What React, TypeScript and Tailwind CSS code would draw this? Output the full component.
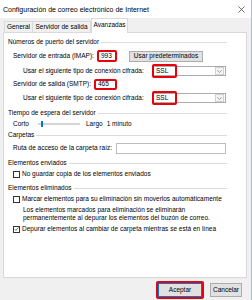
import type { ReactNode } from "react";

function RedMark({ className }: { className: string }) {
  return <div className={`pointer-events-none absolute rounded-[2px] border-2 border-[#e8000b] ${className}`} />;
}

function GroupHeader({ title, className = "" }: { title: string; className?: string }) {
  return (
    <div className={`flex h-[10px] items-center gap-[2px] pr-[19px] ${className}`}>
      <span className="whitespace-nowrap">{title}</span>
      <div className="h-px flex-1 bg-[#dcdcdc]" />
    </div>
  );
}

function Checkbox({ checked = false }: { checked?: boolean }) {
  return (
    <div className="mr-[2px] flex h-[7px] w-[7px] shrink-0 items-center justify-center border border-[#333] bg-white">
      {checked && (
        <svg width="6" height="6" viewBox="0 0 6 6">
          <path d="M0.8 3.1 L2.3 4.6 L5.2 1.2" fill="none" stroke="#222" strokeWidth="0.8" />
        </svg>
      )}
    </div>
  );
}

function CheckRow({ label, checked, className = "" }: { label: string; checked?: boolean; className?: string }) {
  return (
    <div className={`flex h-[10px] items-center pl-[5px] ${className}`}>
      <Checkbox checked={checked} />
      <span className="whitespace-nowrap">{label}</span>
    </div>
  );
}

function Select({ value }: { value: string }) {
  return (
    <div className="relative flex h-[10px] w-[74px] items-center border border-[#acacac] bg-white">
      <span className="flex-1 pl-[3px]">{value}</span>
      <div className="mr-[1px] flex h-[8px] w-[9px] items-center justify-center border border-[#d0d0d0] bg-[#f4f4f4]">
        <svg width="5" height="3" viewBox="0 0 5 3">
          <path d="M0.3 0.3 L2.5 2.5 L4.7 0.3" fill="none" stroke="#777" strokeWidth="0.7" />
        </svg>
      </div>
      <RedMark className="-left-[1px] -top-[3px] h-[14px] w-[25px]" />
    </div>
  );
}

function Row({ children, className = "" }: { children: ReactNode; className?: string }) {
  return <div className={`flex items-center ${className}`}>{children}</div>;
}

export default function App() {
  return (
    <div className="relative h-[300px] w-[252px] overflow-hidden border-r border-[#a9bccf] bg-[#f0f0f0] font-['Liberation_Sans',Arial,sans-serif] text-[6.5px] leading-none text-black">
      {/* Title bar */}
      <div className="flex h-[18px] items-center bg-white pl-[3px] pr-[6px]">
        <span className="flex-1 whitespace-nowrap text-[7px]">Configuración de correo electrónico de Internet</span>
        <svg width="7" height="7" viewBox="0 0 7 7">
          <path d="M0.5 0.5 L6.5 6.5 M6.5 0.5 L0.5 6.5" stroke="#333" strokeWidth="0.7" />
        </svg>
      </div>

      {/* Tabs */}
      <div className="flex h-[14px] items-end pl-[4px]">
        <div className="flex h-[11px] w-[29px] items-center justify-center border border-b-0 border-[#d9d9d9] bg-[#f0f0f0]">General</div>
        <div className="flex h-[11px] w-[58px] items-center justify-center border border-b-0 border-l-0 border-[#d9d9d9] bg-[#f0f0f0]">Servidor de salida</div>
        <div className="relative z-10 -mb-px flex h-[15px] w-[37px] items-center justify-center border border-b-0 border-[#d9d9d9] bg-white pb-[1px]">Avanzadas</div>
      </div>

      {/* Panel */}
      <div className="ml-[3px] flex h-[246px] w-[244px] flex-col border border-[#d9d9d9] bg-white pl-[4px] pt-[4px]">
        <GroupHeader title="Números de puerto del servidor" />

        <Row className="mt-[3px] h-[12px] pl-[5px]">
          <span className="w-[84px] whitespace-nowrap">Servidor de entrada (IMAP):</span>
          <div className="flex h-[12px] w-[20px] items-center rounded-[2px] border-2 border-[#e8000b] bg-white pl-[2px]">993</div>
          <div className="ml-[12px] flex h-[11px] w-[74px] items-center justify-center border border-[#adadad] bg-[#e1e1e1]">Usar predeterminados</div>
        </Row>

        <Row className="mt-[2px] h-[14px] pl-[15px]">
          <span className="w-[129px] whitespace-nowrap">Usar el siguiente tipo de conexión cifrada:</span>
          <Select value="SSL" />
        </Row>

        <Row className="h-[12px] pl-[5px]">
          <span className="w-[81px] whitespace-nowrap">Servidor de salida (SMTP):</span>
          <div className="flex h-[11px] w-[23px] items-center rounded-[2px] border-2 border-[#e8000b] bg-white pl-[2px]">465</div>
        </Row>

        <Row className="mt-[1px] h-[14px] pl-[15px]">
          <span className="w-[129px] whitespace-nowrap">Usar el siguiente tipo de conexión cifrada:</span>
          <Select value="SSL" />
        </Row>

        <GroupHeader title="Tiempo de espera del servidor" className="mt-[3px]" />

        <Row className="mt-[1px] h-[10px] pl-[5px]">
          <span className="w-[25px]">Corto</span>
          <div className="relative flex h-[6px] w-[42px] items-center">
            <div className="h-[2px] w-full border border-[#d6d6d6] bg-[#e7e7e7]" />
            <div className="absolute left-[3px] top-0 h-[6px] w-[2px] bg-[#0078d7]" />
          </div>
          <span className="ml-[6px]">Largo</span>
          <span className="ml-[4px]">1 minuto</span>
        </Row>

        <GroupHeader title="Carpetas" className="mt-[1px]" />

        <Row className="mt-[2px] h-[12px] pl-[5px]">
          <span className="w-[103px] whitespace-nowrap">Ruta de acceso de la carpeta raíz:</span>
          <div className="h-[11px] w-[110px] border border-[#bdbdbd] bg-white" />
        </Row>

        <GroupHeader title="Elementos enviados" className="mt-[4px]" />
        <CheckRow label="No guardar copia de los elementos enviados" className="mt-[1px]" />

        <GroupHeader title="Elementos eliminados" className="mt-[4px]" />
        <CheckRow label="Marcar elementos para su eliminación sin moverlos automáticamente" className="mt-[1px]" />
        <div className="mt-[2px] flex h-[16px] flex-col justify-center pl-[15px] leading-[8px]">
          <span className="whitespace-nowrap">Los elementos marcados para eliminación se eliminarán</span>
          <span className="whitespace-nowrap">permanentemente al depurar los elementos del buzón de correo.</span>
        </div>
        <CheckRow label="Depurar elementos al cambiar de carpeta mientras se está en línea" checked className="mt-[2px]" />
      </div>

      {/* Buttons */}
      <div className="mt-[5px] flex pl-[158px]">
        <div className="relative flex h-[14px] w-[44px] items-center justify-center border border-[#0078d7] bg-[#e1e1e1]">
          Aceptar
          <RedMark className="-inset-[3px]" />
        </div>
        <div className="ml-[8px] flex h-[14px] w-[32px] items-center justify-center border border-[#adadad] bg-[#e1e1e1]">Cancelar</div>
      </div>
    </div>
  );
}
